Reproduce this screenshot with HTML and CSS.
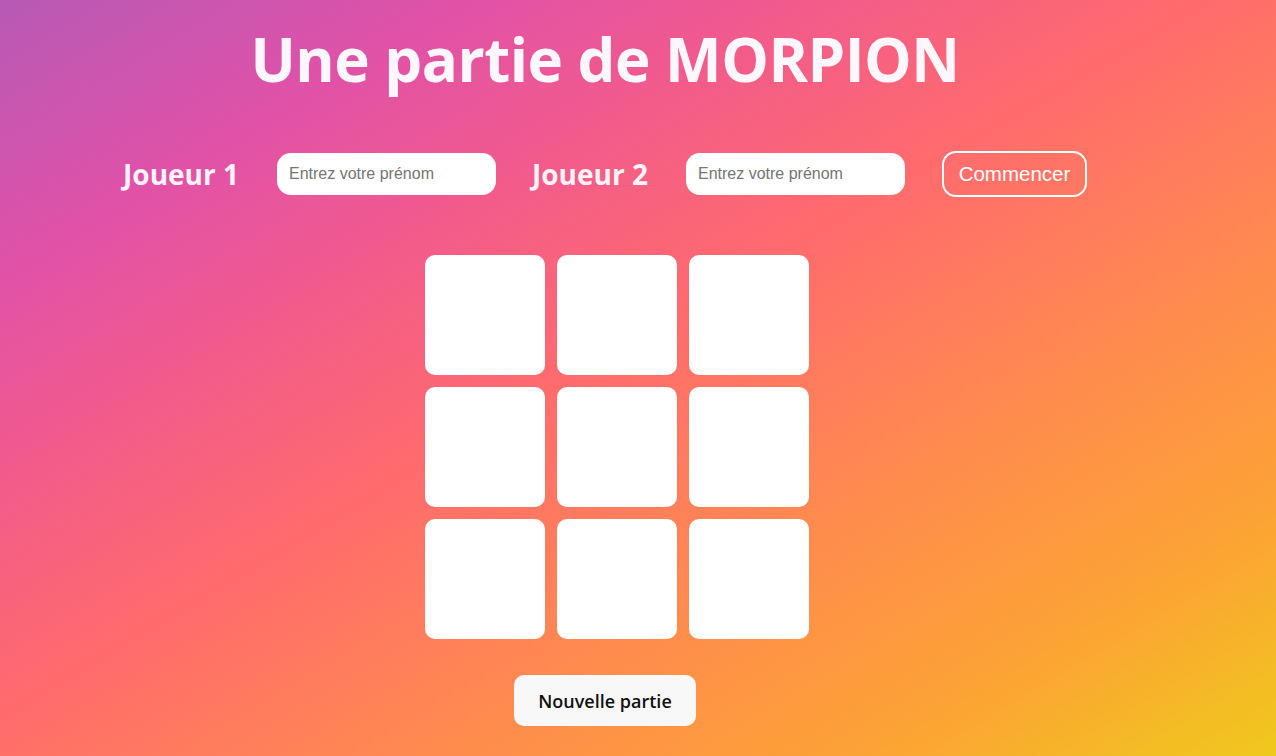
FILE: index.html
```html
<!DOCTYPE html>
<html lang="fr">
<head>
<meta charset="utf-8">
<title>Morpion</title>
<link rel="stylesheet" href="styles.css">
</head>
<body>
<main class="page">
  <h1 class="title">Une partie de MORPION</h1>
  <div class="players">
    <label class="player-label" for="p1">Joueur 1</label>
    <input class="player-input" id="p1" type="text" placeholder="Entrez votre prénom">
    <label class="player-label" for="p2">Joueur 2</label>
    <input class="player-input" id="p2" type="text" placeholder="Entrez votre prénom">
    <button class="start-btn" type="button">Commencer</button>
  </div>
  <div class="board-wrap">
    <div class="board">
      <div class="cell"></div><div class="cell"></div><div class="cell"></div>
      <div class="cell"></div><div class="cell"></div><div class="cell"></div>
      <div class="cell"></div><div class="cell"></div><div class="cell"></div>
    </div>
  </div>
  <div class="actions">
    <button class="reset-btn" type="button">Nouvelle partie</button>
  </div>
</main>
</body>
</html>
```

FILE: styles.css
```css
* { box-sizing: border-box; }
html, body { height: 100%; }
body {
  margin: 0;
  min-height: 756px;
  overflow: hidden;
  font-family: "Open Sans", "Noto Sans", sans-serif;
  background: linear-gradient(to bottom right, #b65ab5 0%, #e052a8 18%, #f0598f 30%, #ff6b6e 47%, #ff8a50 66%, #fca335 84%, #efc91d 100%);
}
.page {
  width: 1210px;
  display: flex;
  flex-direction: column;
  align-items: center;
}
.title {
  margin: 20px 0 0;
  font-size: 60px;
  font-weight: 700;
  line-height: 78px;
  color: #fdf6fa;
  letter-spacing: -0.5px;
}
.players {
  margin-top: 53px;
  display: flex;
  align-items: center;
  height: 46px;
}
.player-label {
  font-size: 28px;
  font-weight: 700;
  color: #fff2f8;
}
.player-input {
  width: 219px;
  height: 42px;
  margin: 0 36px 0 38px;
  border: none;
  border-radius: 14px;
  padding: 0 12px;
  font-family: "Liberation Sans", Arial, sans-serif;
  font-size: 16px;
  background: #fff;
  outline: none;
}
.player-input::placeholder { color: #757575; }
.start-btn {
  margin-left: 1px;
  width: 145px;
  height: 46px;
  border: 2px solid #fff;
  border-radius: 14px;
  background: transparent;
  color: #fff;
  font-family: "Liberation Sans", Arial, sans-serif;
  font-size: 20.5px;
}
.board-wrap {
  margin-top: 58px;
  padding-left: 24px;
}
.board {
  display: grid;
  grid-template-columns: repeat(3, 120px);
  grid-template-rows: repeat(3, 120px);
  gap: 12px;
}
.cell {
  background: #fff;
  border-radius: 10px;
}
.actions { margin-top: 36px; }
.reset-btn {
  width: 182px;
  height: 51px;
  border: none;
  border-radius: 10px;
  background: #f8f8f9;
  color: #111;
  font-family: "Open Sans", "Noto Sans", sans-serif;
  font-size: 18px;
  font-weight: 600;
}
```
